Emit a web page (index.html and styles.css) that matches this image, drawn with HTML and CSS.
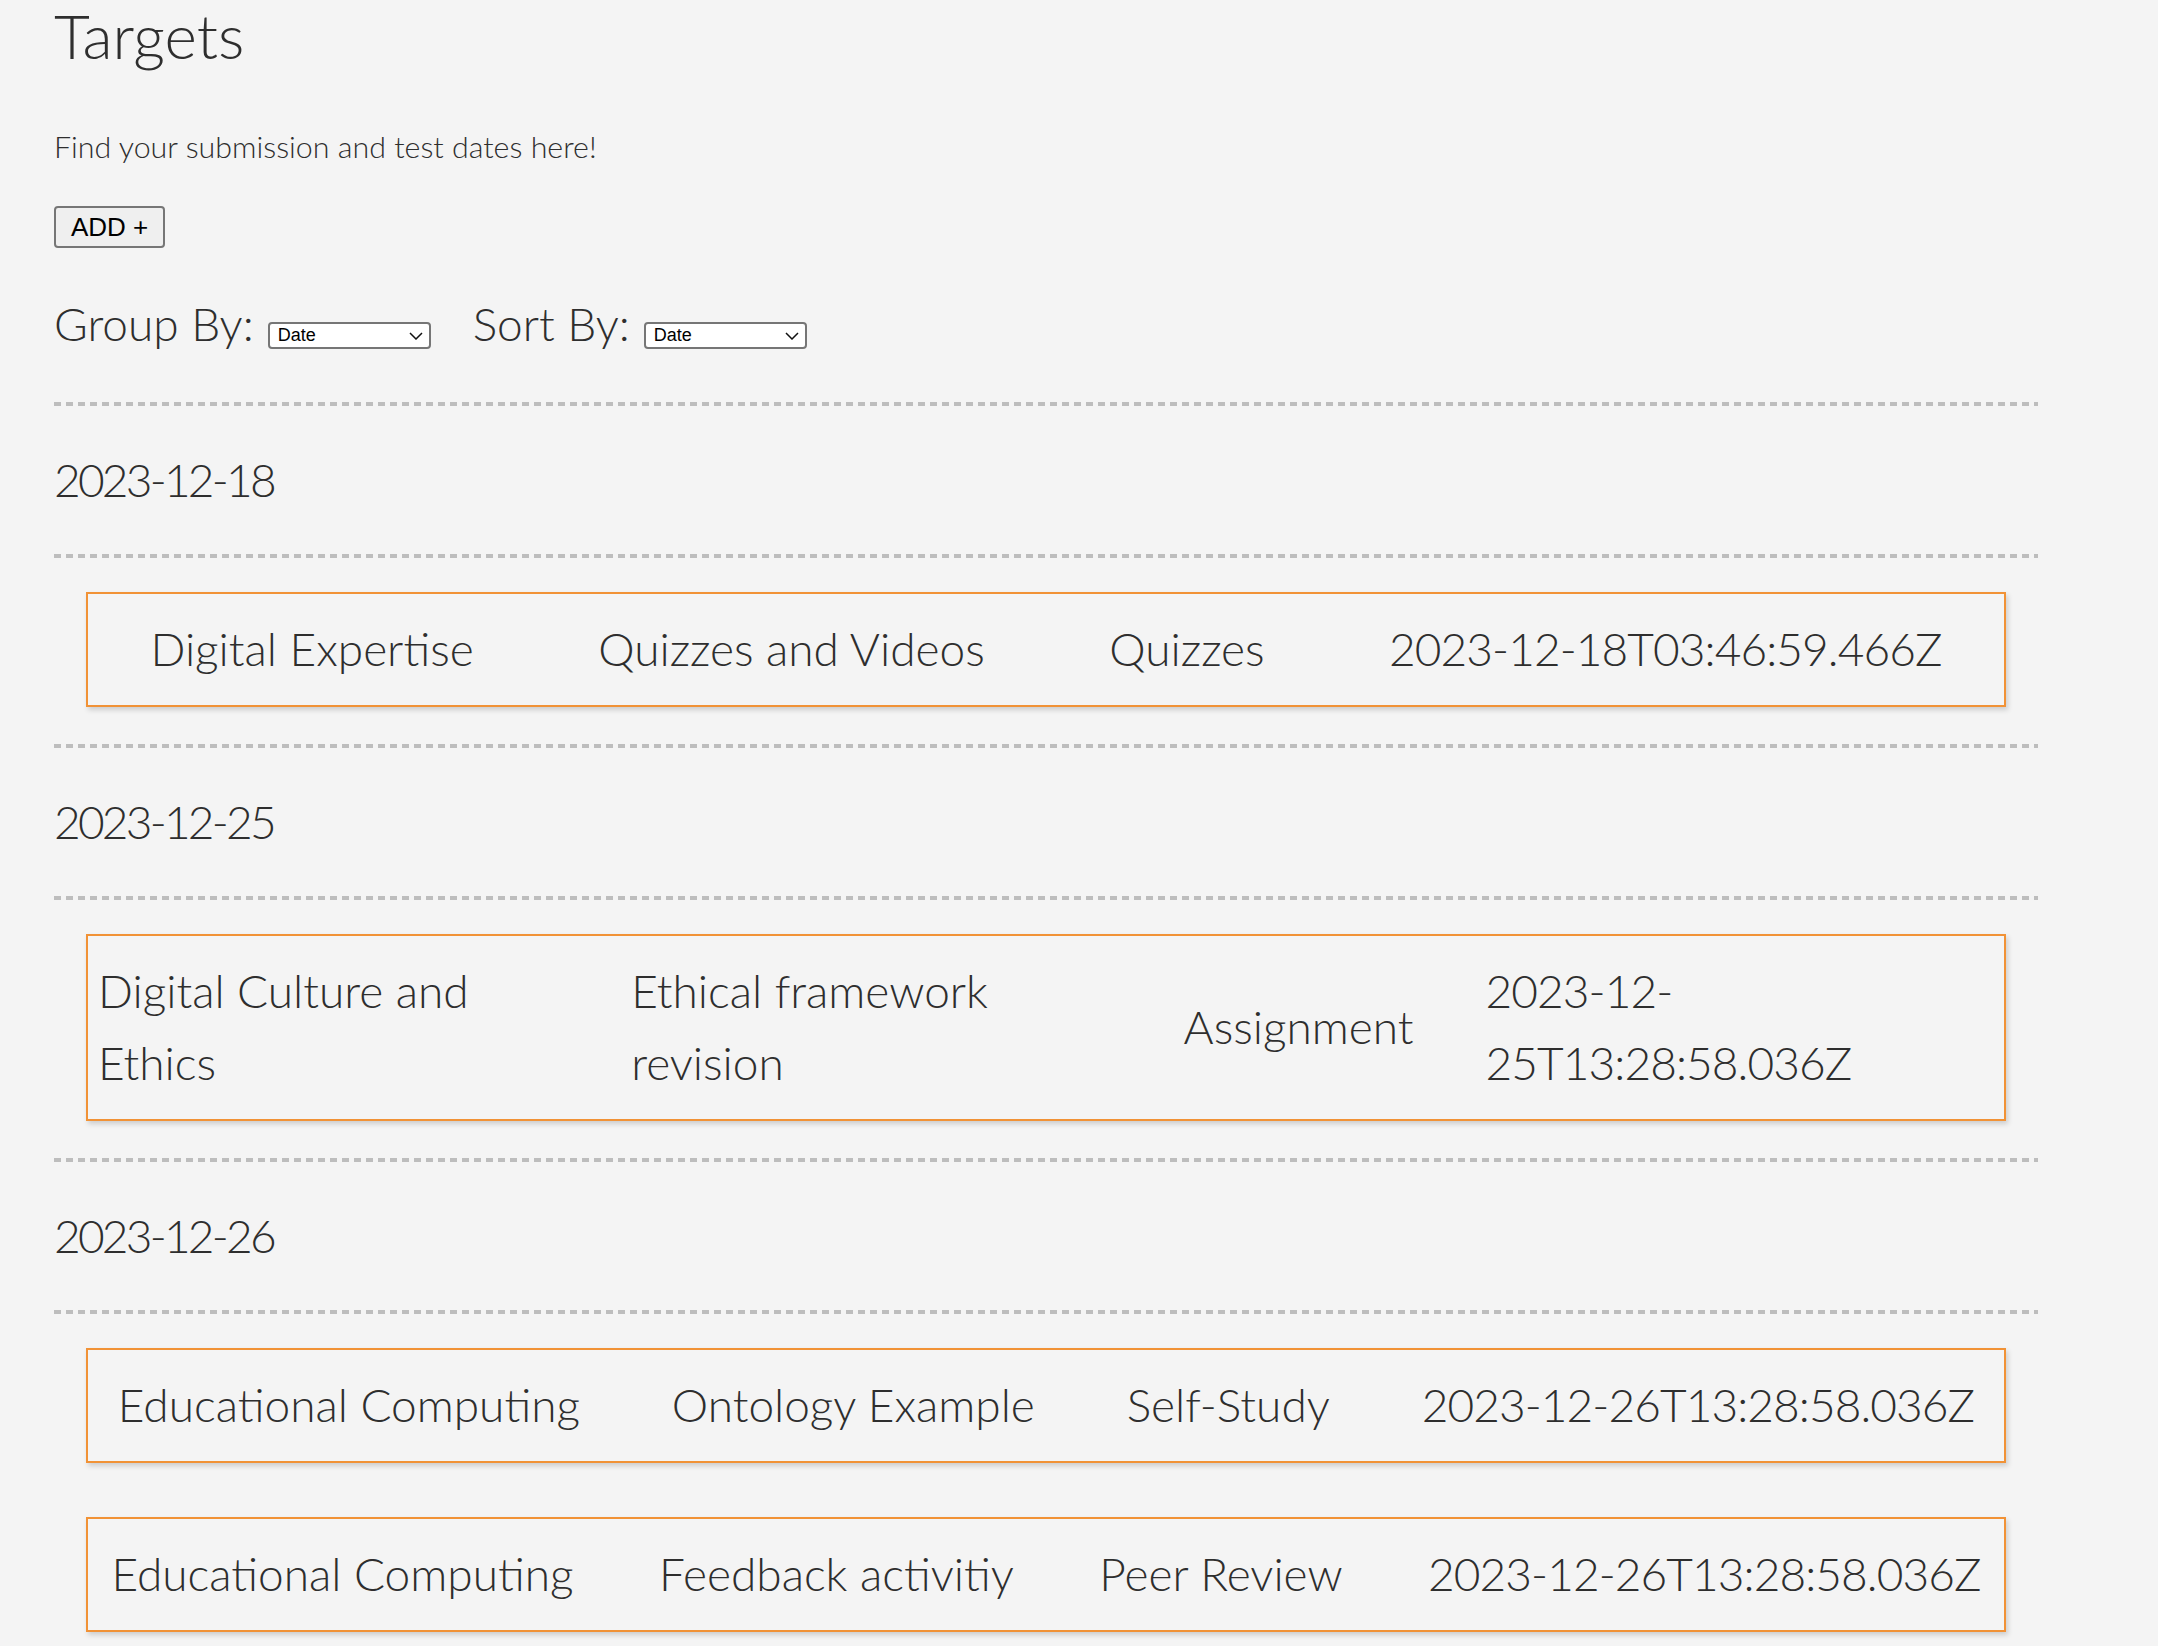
FILE: index.html
```html
<!DOCTYPE html>
<html lang="en">
<head>
<meta charset="utf-8">
<title>Targets</title>
<link rel="stylesheet" href="styles.css">
</head>
<body>
<main class="page">
  <h1 class="title">Targets</h1>
  <p class="subtitle">Find your submission and test dates here!</p>
  <button class="add-btn" type="button">ADD +</button>
  <div class="filters">
    <label class="filter">Group By:
      <span class="select-wrap">
        <select class="filter-select"><option>Date</option><option>Course</option><option>Type</option></select>
        <svg class="chevron" width="14" height="8" viewBox="0 0 14 8"><path d="M1 1 L7 7 L13 1" fill="none" stroke="#111" stroke-width="1.5"/></svg>
      </span>
    </label>
    <label class="filter">Sort By:
      <span class="select-wrap">
        <select class="filter-select"><option>Date</option><option>Course</option><option>Type</option></select>
        <svg class="chevron" width="14" height="8" viewBox="0 0 14 8"><path d="M1 1 L7 7 L13 1" fill="none" stroke="#111" stroke-width="1.5"/></svg>
      </span>
    </label>
  </div>

  <section class="group">
    <div class="rule"></div>
    <h2 class="group-date">2023-12-18</h2>
    <div class="rule"></div>
    <div class="cards">
      <div class="card">
        <span class="cell">Digital Expertise</span>
        <span class="cell">Quizzes and Videos</span>
        <span class="cell">Quizzes</span>
        <span class="cell num">2023-12-18T03:46:59.466Z</span>
      </div>
    </div>
  </section>

  <section class="group">
    <div class="rule"></div>
    <h2 class="group-date">2023-12-25</h2>
    <div class="rule"></div>
    <div class="cards">
      <div class="card">
        <span class="cell">Digital Culture and Ethics</span>
        <span class="cell">Ethical framework revision</span>
        <span class="cell">Assignment</span>
        <span class="cell num">2023-12-25T13:28:58.036Z</span>
      </div>
    </div>
  </section>

  <section class="group">
    <div class="rule"></div>
    <h2 class="group-date">2023-12-26</h2>
    <div class="rule"></div>
    <div class="cards">
      <div class="card">
        <span class="cell">Educational Computing</span>
        <span class="cell">Ontology Example</span>
        <span class="cell">Self-Study</span>
        <span class="cell num">2023-12-26T13:28:58.036Z</span>
      </div>
      <div class="card">
        <span class="cell">Educational Computing</span>
        <span class="cell">Feedback activitiy</span>
        <span class="cell">Peer Review</span>
        <span class="cell num">2023-12-26T13:28:58.036Z</span>
      </div>
    </div>
  </section>
</main>
</body>
</html>
```
FILE: styles.css
```css
html, body {
  margin: 0;
  padding: 0;
  background: #f4f4f4;
}

body {
  font-family: Lato, "Open Sans", sans-serif;
  color: #2e2e2e;
  font-weight: 300;
}

.page {
  width: 1984px;
  margin-left: 54px;
  padding-top: 4px;
}

.title {
  margin: 0;
  font-size: 62px;
  line-height: 62px;
  font-weight: 300;
}

.subtitle {
  margin: 56px 0 0;
  font-size: 30.4px;
  line-height: 48px;
}

.add-btn {
  display: block;
  margin-top: 36px;
  height: 42px;
  padding: 0 15px;
  box-sizing: border-box;
  font-family: "Liberation Sans", Arial, sans-serif;
  font-size: 26px;
  color: #000;
  background: #efefef;
  border: 2px solid #767676;
  border-radius: 4px;
}

.filters {
  display: flex;
  align-items: baseline;
  gap: 42px;
  margin-top: 40px;
  font-size: 46px;
  line-height: 72px;
}

.filter {
  display: flex;
  align-items: baseline;
  gap: 14px;
}

.select-wrap {
  position: relative;
  display: inline-block;
  line-height: normal;
}

.filter-select {
  -webkit-appearance: none;
  appearance: none;
  display: block;
  width: 163px;
  height: 27px;
  box-sizing: border-box;
  font-family: "Liberation Sans", Arial, sans-serif;
  font-size: 18px;
  line-height: 23px;
  color: #000;
  background-color: #fff;
  border: 2px solid #767676;
  border-radius: 4px;
  padding: 0 26px 0 8px;
  margin: 0;
}

.chevron {
  position: absolute;
  right: 8px;
  top: 10px;
  pointer-events: none;
}

.filters + .group {
  margin-top: 42px;
}

.rule {
  height: 4px;
  background: repeating-linear-gradient(90deg, #bdbdbd 0 7px, transparent 7px 12px);
}

.group-date {
  margin: 38px 0;
  font-size: 46px;
  line-height: 72px;
  font-weight: 300;
  letter-spacing: -0.06em;
}

.cards {
  display: flex;
  flex-direction: column;
  gap: 54px;
  padding: 34px 0 37px;
}

.card {
  display: flex;
  justify-content: space-evenly;
  align-items: center;
  column-gap: 72px;
  margin: 0 32px;
  padding: 19px 10px 20px;
  border: 2px solid #f19236;
  box-shadow: 2px 3px 5px rgba(0, 0, 0, 0.16);
  font-size: 46px;
  line-height: 72px;
}

.cell {
  display: block;
}

.num {
  letter-spacing: -0.02em;
}
```
